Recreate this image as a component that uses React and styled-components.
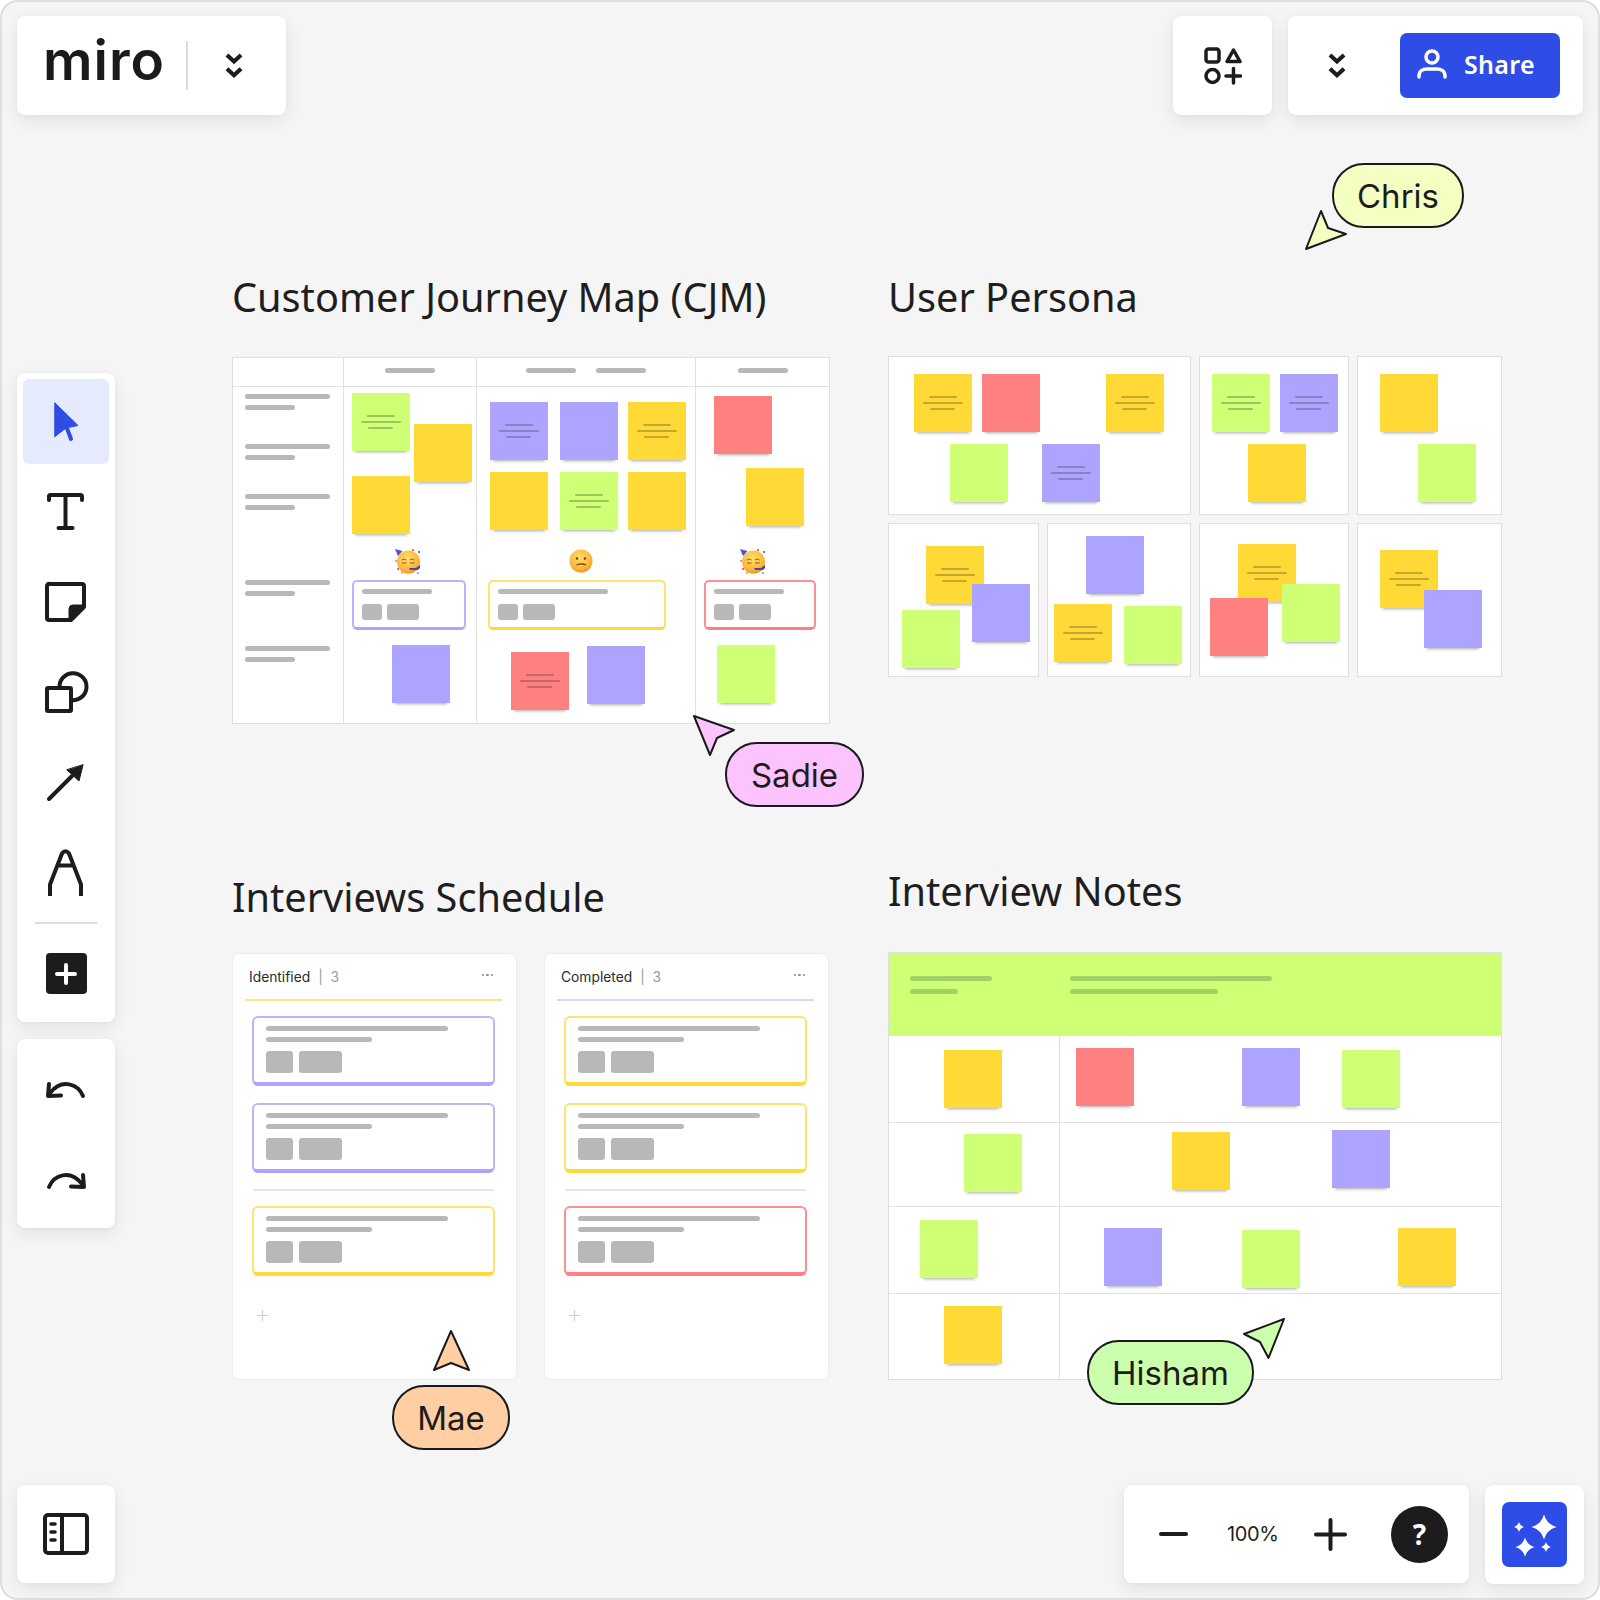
import React from "react";
import styled, { createGlobalStyle } from "styled-components";

const Y = "#ffd935", R = "#ff8080", P = "#ada4ff", G = "#cfff75";
const LIGHT = { [Y]: "#ffe36e", [R]: "#fb8f92", [P]: "#bcb4ff" };
const INK = "#1c1c1e";
const BLUE = "#2e4de6";
const SANS = '"Noto Sans", "Open Sans", sans-serif';
const UI = 'Inter, "Liberation Sans", sans-serif';

const Global = createGlobalStyle`
  html, body { margin: 0; padding: 0; background: #fff; }
  * { box-sizing: border-box; }
`;

const Shell = styled.div`
  width: 1600px;
  height: 1600px;
  display: grid;
  background: #f5f5f5;
  border-radius: 18px;
  box-shadow: inset 0 0 0 2px #dfdfdf;
  overflow: hidden;
  font-family: ${UI};
  color: ${INK};
`;

/* ---------- floating chrome ---------- */
const Chrome = styled.div`
  grid-area: 1 / 1;
  position: relative;
  z-index: 2;
  display: grid;
  grid-template-rows: auto 1fr auto;
  padding: 16px 16px 16px 17px;
  pointer-events: none;
`;
const TopBar = styled.div`
  display: flex;
  justify-content: space-between;
  padding-right: 1px;
`;
const BottomBar = styled.div`
  display: flex;
  justify-content: space-between;
`;
const Group = styled.div`
  display: flex;
  gap: 16px;
`;
const Panel = styled.div`
  background: #fff;
  border-radius: 8px;
  box-shadow: 0 6px 18px rgba(20, 20, 40, 0.08), 0 1px 4px rgba(20, 20, 40, 0.04);
`;
const LogoPanel = styled(Panel)`
  width: 269px;
  height: 99px;
  display: flex;
  align-items: center;
  padding-left: 26px;
`;
const LogoText = styled.span`
  font-family: ${UI};
  font-size: 55px;
  font-weight: 600;
  line-height: 1;
  letter-spacing: 1px;
  width: 143px;
  color: #1a1a1c;
  margin-top: -10px;
`;
const VDivider = styled.span`
  width: 2px;
  height: 49px;
  background: #dcdcdc;
`;
const Chevrons = styled.svg`
  width: 18px;
  height: 26px;
  fill: none;
  stroke: ${INK};
  stroke-width: 3.8;
  flex: none;
  margin-left: ${(p) => p.$ml || 0}px;
`;
const SquarePanel = styled(Panel)`
  width: 99px;
  height: 99px;
  display: flex;
  align-items: center;
  justify-content: center;
`;
const SharePanel = styled(Panel)`
  width: 295px;
  height: 99px;
  display: flex;
  align-items: center;
  padding-left: 40px;
`;
const ShareButton = styled.div`
  margin-left: 54px;
  width: 160px;
  height: 65px;
  border-radius: 7px;
  background: ${BLUE};
  display: flex;
  align-items: center;
  gap: 17px;
  padding: 0 0 3px 17px;
  color: #fff;
  font-family: ${SANS};
  font-size: 25px;
  font-weight: 600;
  letter-spacing: 0.3px;
`;
const ToolColumn = styled.div`
  display: flex;
  flex-direction: column;
  gap: 17px;
  width: 98px;
  margin-top: 258px;
`;
const ToolPanel = styled(Panel)`
  display: flex;
  flex-direction: column;
  gap: 5px;
  padding: 6px 6px 28px;
`;
const UndoPanel = styled(Panel)`
  display: flex;
  flex-direction: column;
  gap: 6px;
  padding: 7px 6px 0;
  height: 189px;
`;
const Tool = styled.div`
  height: 85px;
  display: flex;
  align-items: center;
  justify-content: center;
  border-radius: 6px;
  background: ${(p) => (p.$active ? "#e6eafd" : "transparent")};
`;
const ToolDivider = styled.div`
  height: 2px;
  margin: 3px 12px 24px;
  background: #dcdcdc;
`;
const AddButton = styled.div`
  width: 41px;
  height: 41px;
  border-radius: 4px;
  background: ${INK};
  align-self: center;
  display: flex;
  align-items: center;
  justify-content: center;
`;
const IconPanel = styled(Panel)`
  width: 98px;
  height: 98px;
  display: flex;
  align-items: center;
  justify-content: center;
`;
const ZoomPanel = styled(Panel)`
  width: 345px;
  height: 98px;
  display: flex;
  align-items: center;
  padding-left: 35px;
  gap: 39px;
`;
const ZoomValue = styled.span`
  width: 48px;
  font-size: 20px;
  text-align: center;
  letter-spacing: -0.4px;
  color: #1f1f21;
`;
const HelpDot = styled.span`
  width: 57px;
  height: 57px;
  margin-left: 5px;
  border-radius: 50%;
  background: ${INK};
  color: #fff;
  display: flex;
  align-items: center;
  justify-content: center;
  font-family: ${SANS};
  font-size: 28px;
  font-weight: 700;
`;
const SparkButton = styled.div`
  width: 65px;
  height: 65px;
  border-radius: 7px;
  background: ${BLUE};
`;
const Svg = styled.svg`
  display: block;
  flex: none;
  fill: none;
  stroke: ${(p) => p.$stroke || INK};
  stroke-width: ${(p) => p.$sw || 4};
  stroke-linecap: round;
  stroke-linejoin: round;
`;

/* ---------- board ---------- */
const Board = styled.div`
  grid-area: 1 / 1;
  position: relative;
  display: grid;
  grid-template-columns: 598px 614px;
  grid-template-rows: 451px auto;
  column-gap: 58px;
  row-gap: 143px;
  padding: 272px 0 0 232px;
  align-content: start;
`;
const Section = styled.section`
  display: flex;
  flex-direction: column;
  gap: ${(p) => p.$gap}px;
  align-self: ${(p) => (p.$top ? "start" : "end")};
`;
const Title = styled.h2`
  margin: 0;
  font-family: ${SANS};
  font-size: 39.7px;
  font-weight: 400;
  line-height: 50px;
  color: #1e1e20;
  white-space: nowrap;
`;
const Frame = styled.div`
  position: relative;
  background: #fff;
  border: 1px solid #dedede;
`;
const CjmFrame = styled(Frame)`
  height: 367px;
  display: grid;
  grid-template-columns: 111px 133px 219px 1fr;
  grid-template-rows: 29px 1fr;
`;
const HeadCell = styled.div`
  display: flex;
  align-items: center;
  justify-content: center;
  gap: 20px;
  padding-bottom: 4px;
  border-bottom: 1px solid #e2e2e2;
  border-right: ${(p) => (p.$last ? "0" : "1px solid #e2e2e2")};
`;
const BodyCell = styled.div`
  border-right: ${(p) => (p.$last ? "0" : "1px solid #e2e2e2")};
  display: flex;
  flex-direction: column;
  padding: ${(p) => p.$pad || "0"};
`;
const Bar = styled.span`
  display: block;
  flex: none;
  width: ${(p) => p.$w}px;
  height: 5px;
  border-radius: 3px;
  background: ${(p) => p.$c || "#b8b8b8"};
`;
const LabelPair = styled.div`
  display: flex;
  flex-direction: column;
  gap: 6px;
  margin-top: ${(p) => p.$mt}px;
`;
const Note = styled.div.attrs((p) => ({ style: { left: p.$x, top: p.$y } }))`
  position: absolute;
  width: ${(p) => p.$w || 58}px;
  height: 58px;
  background: ${(p) => p.$c};
  box-shadow: 0 4px 3px -3px rgba(0, 0, 0, 0.34);
  display: flex;
  flex-direction: column;
  align-items: center;
  justify-content: center;
  gap: 4px;
  padding-right: 1px;
`;
const NoteLine = styled.span`
  height: 2px;
  width: ${(p) => p.$w}px;
  background: rgba(40, 40, 40, 0.28);
  border-radius: 1px;
`;
const MiniCard = styled.div.attrs((p) => ({ style: { left: p.$x, top: p.$y } }))`
  position: absolute;
  width: ${(p) => p.$w}px;
  height: 50px;
  background: #fff;
  border: 2px solid ${(p) => LIGHT[p.$c]};
  border-bottom: 3px solid ${(p) => p.$c};
  border-radius: 5px;
  padding: 7px 8px;
  display: flex;
  flex-direction: column;
  gap: 10px;
`;
const Chips = styled.div`
  display: flex;
  gap: ${(p) => p.$gap || 5}px;
`;
const Chip = styled.span`
  width: ${(p) => p.$w}px;
  height: ${(p) => p.$h}px;
  border-radius: 3px;
  background: #b8b8b8;
`;
const Face = styled.svg.attrs((p) => ({ style: { left: p.$x, top: p.$y } }))`
  position: absolute;
  width: 28px;
  height: 28px;
`;
const PersonaStack = styled.div`
  display: flex;
  flex-direction: column;
  gap: 8px;
`;
const PersonaRow = styled.div`
  display: flex;
  gap: 8px;
`;
const PersonaFrame = styled(Frame)`
  width: ${(p) => p.$w}px;
  height: ${(p) => p.$h}px;
`;
const Columns = styled.div`
  display: flex;
  gap: 27px;
`;
const Column = styled.div`
  width: 285px;
  height: 427px;
  background: #fff;
  border: 1px solid #ececec;
  border-radius: 7px;
  display: flex;
  flex-direction: column;
`;
const ColumnHead = styled.div`
  height: 45px;
  padding: 0 23px 0 16px;
  display: flex;
  align-items: center;
  font-size: 13.8px;
  color: #2a2a2c;
`;
const Count = styled.span`
  color: #9a9a9a;
  margin-left: 8px;
`;
const Dots = styled.span`
  margin-left: auto;
  display: flex;
  gap: 2px;
  margin-top: -3px;
`;
const Dot = styled.i`
  width: 2.5px;
  height: 2.5px;
  border-radius: 50%;
  background: #888;
`;
const ColumnRule = styled.div`
  height: 2px;
  margin: 0 14px 0 12px;
  background: ${(p) => p.$c};
`;
const CardList = styled.div`
  padding: 15px 21px 0 19px;
  display: flex;
  flex-direction: column;
  gap: 17px;
`;
const BigCard = styled.div`
  height: 70px;
  background: #fff;
  border: 2px solid ${(p) => LIGHT[p.$c]};
  border-bottom: 4px solid ${(p) => p.$c};
  border-radius: 6px;
  padding: 8px 12px 6px;
  display: flex;
  flex-direction: column;
  gap: 6px;
`;
const CardChips = styled(Chips)`
  margin-top: 3px;
`;
const ListRule = styled.div`
  height: 2px;
  margin: -1px 1px -2px;
  background: #e8e8e8;
`;
const AddMark = styled(Svg)`
  margin: 34px 0 0 24px;
`;
const NotesFrame = styled(Frame)`
  height: 428px;
  display: grid;
  grid-template-columns: 171px 1fr;
  grid-template-rows: 83px 86px 84px 87px 1fr;
`;
const NotesHead = styled.div`
  grid-column: 1 / -1;
  background: ${G};
  display: grid;
  grid-template-columns: 171px 1fr;
  padding-top: 23px;
`;
const HeadGroup = styled.div`
  display: flex;
  flex-direction: column;
  gap: 8px;
  padding-left: ${(p) => p.$pl}px;
`;
const NotesCell = styled.div`
  border-top: ${(p) => (p.$first ? "0" : "1px solid #e2e2e2")};
  border-right: ${(p) => (p.$left ? "1px solid #e2e2e2" : "0")};
`;

/* cursors */
const CursorSvg = styled.svg`
  position: absolute;
  overflow: visible;
  z-index: 1;
`;
const Pill = styled.div.attrs((p) => ({ style: { left: p.$x, top: p.$y, width: p.$w } }))`
  position: absolute;
  z-index: 1;
  height: 65px;
  border: 2px solid #1a1a1c;
  border-radius: 32px;
  background: ${(p) => p.$c};
  display: flex;
  align-items: center;
  justify-content: center;
  font-family: ${UI};
  font-size: 33px;
  color: #1c1c1e;
`;

/* ---------- data (page coordinates, converted to frame offsets when drawn) ---------- */
const cjmNotes = [
  [G, 352, 393, 1], [Y, 414, 424], [Y, 352, 476],
  [P, 490, 402, 1], [P, 560, 402], [Y, 628, 402, 1],
  [Y, 490, 472], [G, 560, 472, 1], [Y, 628, 472],
  [R, 714, 396], [Y, 746, 468],
  [P, 392, 645], [R, 511, 652, 1], [P, 587, 646], [G, 717, 645],
];
const miniCards = [
  { c: P, x: 352, w: 114, bar: 70 },
  { c: Y, x: 488, w: 178, bar: 110 },
  { c: R, x: 704, w: 112, bar: 70 },
];
const personaRows = [
  [
    { x: 888, y: 356, w: 303, h: 159, notes: [[Y, 914, 374, 1], [R, 982, 374], [Y, 1106, 374, 1], [G, 950, 444], [P, 1042, 444, 1]] },
    { x: 1199, y: 356, w: 150, h: 159, notes: [[G, 1212, 374, 1], [P, 1280, 374, 1], [Y, 1248, 444]] },
    { x: 1357, y: 356, w: 145, h: 159, notes: [[Y, 1380, 374], [G, 1418, 444]] },
  ],
  [
    { x: 888, y: 523, w: 151, h: 154, notes: [[Y, 926, 546, 1], [P, 972, 584], [G, 902, 610]] },
    { x: 1047, y: 523, w: 144, h: 154, notes: [[P, 1086, 536], [Y, 1054, 604, 1], [G, 1124, 606]] },
    { x: 1199, y: 523, w: 150, h: 154, notes: [[Y, 1238, 544, 1], [R, 1210, 598], [G, 1282, 584]] },
    { x: 1357, y: 523, w: 145, h: 154, notes: [[Y, 1380, 550, 1], [P, 1424, 590]] },
  ],
];
const interviewNotes = [
  [Y, 944, 1050], [R, 1076, 1048], [P, 1242, 1048], [G, 1342, 1050],
  [G, 964, 1134], [Y, 1172, 1132], [P, 1332, 1130],
  [G, 920, 1220], [P, 1104, 1228], [G, 1242, 1230], [Y, 1398, 1228],
  [Y, 944, 1306],
];
const cursors = [
  { name: "Chris", c: "#f6ffc2", x: 1332, y: 163, w: 132, pts: [[1306, 249], [1321, 211], [1328, 228], [1346, 234]] },
  { name: "Sadie", c: "#fdc3ff", x: 725, y: 742, w: 139, pts: [[694, 716], [734, 730], [717, 738], [710, 755]] },
  { name: "Mae", c: "#ffcfa3", x: 392, y: 1385, w: 118, pts: [[451, 1331], [469, 1370], [451, 1363], [434, 1370]] },
  { name: "Hisham", c: "#ccffad", x: 1087, y: 1340, w: 167, pts: [[1284, 1319], [1244, 1334], [1260, 1342], [1268.5, 1358]] },
];

const StickyNote = ({ c, x, y, lines, w }) => (
  <Note $c={c} $x={x} $y={y} $w={w}>
    {lines && (
      <>
        <NoteLine $w={28} />
        <NoteLine $w={40} />
        <NoteLine $w={25} />
      </>
    )}
  </Note>
);

const DoubleChevron = ({ ml }) => (
  <Chevrons viewBox="0 0 16 24" $ml={ml}>
    <path d="M1.5 1.800 8 7.800l6.500-6M1.500 14.500 8 20.500l6.500-6" />
  </Chevrons>
);

const PartyFace = ({ x, y, id }) => (
  <Face viewBox="0 0 28 28" $x={x} $y={y}>
    <defs>
      <radialGradient id={id} cx="45%" cy="35%" r="70%">
        <stop offset="0%" stopColor="#ffe06a" />
        <stop offset="70%" stopColor="#fdb53a" />
        <stop offset="100%" stopColor="#ee8720" />
      </radialGradient>
    </defs>
    <circle cx="14.5" cy="15" r="11.5" fill={`url(#${id})`} />
    <path d="M1 2 8.5 4 4 9z" fill="#5a50c8" />
    <path d="M8 13c1.500-1 3-1 4.500 0M16 13c1.500-1 3-1 4.500 0M8 16h4.500M16 16h4.500" stroke="#8a5418" strokeWidth="1" fill="none" />
    <path d="M15 21h7l4-3v3l-2 2h-8z" fill="#4d46a8" />
    <circle cx="4" cy="22" r="1" fill="#d9413a" />
    <circle cx="25" cy="5" r="1" fill="#4d46a8" />
    <circle cx="19" cy="3" r="1" fill="#d9413a" />
    <circle cx="2" cy="14" r=".8" fill="#4d46a8" />
    <circle cx="8" cy="26" r=".8" fill="#d9413a" />
    <circle cx="24" cy="26" r=".8" fill="#4d46a8" />
  </Face>
);

const SadFace = ({ x, y }) => (
  <Face viewBox="0 0 28 28" $x={x} $y={y}>
    <defs>
      <radialGradient id="sad" cx="45%" cy="35%" r="70%">
        <stop offset="0%" stopColor="#ffe06a" />
        <stop offset="70%" stopColor="#fdb53a" />
        <stop offset="100%" stopColor="#ee8720" />
      </radialGradient>
    </defs>
    <circle cx="14" cy="14" r="11.500" fill="url(#sad)" />
    <circle cx="10" cy="11.500" r="1.200" fill="#6b4210" />
    <circle cx="18" cy="11.500" r="1.200" fill="#6b4210" />
    <path d="M9.500 18c2.500-1 4.500-1.300 6.500-1 1.200.2 2 .5 3 1" stroke="#6b4210" strokeWidth="1.300" fill="none" />
  </Face>
);

const star = (cx, cy, r) => {
  const k = r * 0.22;
  return `M${cx} ${cy - r}Q${cx + k} ${cy - k} ${cx + r} ${cy}Q${cx + k} ${cy + k} ${cx} ${cy + r}Q${cx - k} ${cy + k} ${cx - r} ${cy}Q${cx - k} ${cy - k} ${cx} ${cy - r}Z`;
};

const Sticky = ({ notes, ox, oy }) =>
  notes.map(([c, x, y, lines], i) => <StickyNote key={i} c={c} x={x - ox} y={y - oy} lines={lines} />);

const Cursor = ({ pts, c }) => {
  const xs = pts.map((p) => p[0]);
  const ys = pts.map((p) => p[1]);
  const l = Math.min(...xs);
  const t = Math.min(...ys);
  return (
    <CursorSvg
      viewBox={`${l} ${t} ${Math.max(...xs) - l} ${Math.max(...ys) - t}`}
      width={Math.max(...xs) - l}
      height={Math.max(...ys) - t}
      style={{ left: l, top: t }}
    >
      <polygon points={pts.map((p) => p.join(",")).join(" ")} fill={c} stroke="#1a1a1c" strokeWidth="2" strokeLinejoin="round" />
    </CursorSvg>
  );
};

const ScheduleColumn = ({ title, rule, cards }) => (
  <Column>
    <ColumnHead>
      {title}
      <Count>|&nbsp;&nbsp;3</Count>
      <Dots>
        <Dot />
        <Dot />
        <Dot />
      </Dots>
    </ColumnHead>
    <ColumnRule $c={rule} />
    <CardList>
      {cards.map((c, i) => (
        <React.Fragment key={i}>
          {i === 2 && <ListRule />}
          <BigCard $c={c}>
            <Bar $w={182} />
            <Bar $w={106} />
            <CardChips $gap={6}>
              <Chip $w={27} $h={22} />
              <Chip $w={43} $h={22} />
            </CardChips>
          </BigCard>
        </React.Fragment>
      ))}
    </CardList>
    <AddMark as="svg" width="11" height="11" viewBox="0 0 11 11" $stroke="#cfcfcf" $sw={1.2}>
      <path d="M5.500 .5v10M.5 5.500h10" />
    </AddMark>
  </Column>
);

export default function App() {
  return (
    <Shell>
      <Global />
      <Board>
        <Section $gap={35} $top>
          <Title>Customer Journey Map (CJM)</Title>
          <CjmFrame>
            <HeadCell />
            <HeadCell><Bar $w={50} /></HeadCell>
            <HeadCell><Bar $w={50} /><Bar $w={50} /></HeadCell>
            <HeadCell $last><Bar $w={50} /></HeadCell>
            <BodyCell $pad="7px 0 0 12px">
              <LabelPair $mt={0}><Bar $w={85} /><Bar $w={50} /></LabelPair>
              <LabelPair $mt={34}><Bar $w={85} /><Bar $w={50} /></LabelPair>
              <LabelPair $mt={34}><Bar $w={85} /><Bar $w={50} /></LabelPair>
              <LabelPair $mt={70}><Bar $w={85} /><Bar $w={50} /></LabelPair>
              <LabelPair $mt={50}><Bar $w={85} /><Bar $w={50} /></LabelPair>
            </BodyCell>
            <BodyCell />
            <BodyCell />
            <BodyCell $last />
            <Sticky notes={cjmNotes} ox={233} oy={358} />
            {miniCards.map((m) => (
              <MiniCard key={m.x} $c={m.c} $x={m.x - 233} $y={222} $w={m.w}>
                <Bar $w={m.bar} />
                <Chips>
                  <Chip $w={20} $h={16} />
                  <Chip $w={32} $h={16} />
                </Chips>
              </MiniCard>
            ))}
            <PartyFace id="p1" x={161} y={189} />
            <SadFace x={334} y={189} />
            <PartyFace id="p2" x={506} y={189} />
          </CjmFrame>
        </Section>

        <Section $gap={34} $top>
          <Title>User Persona</Title>
          <PersonaStack>
            {personaRows.map((row, i) => (
              <PersonaRow key={i}>
                {row.map((f) => (
                  <PersonaFrame key={f.x} $w={f.w} $h={f.h}>
                    <Sticky notes={f.notes} ox={f.x + 1} oy={f.y + 1} />
                  </PersonaFrame>
                ))}
              </PersonaRow>
            ))}
          </PersonaStack>
        </Section>

        <Section $gap={31}>
          <Title>Interviews Schedule</Title>
          <Columns>
            <ScheduleColumn title="Identified" rule="#ffe680" cards={[P, P, Y]} />
            <ScheduleColumn title="Completed" rule="#d9d6f7" cards={[Y, Y, R]} />
          </Columns>
        </Section>

        <Section $gap={36}>
          <Title>Interview Notes</Title>
          <NotesFrame>
            <NotesHead>
              <HeadGroup $pl={21}>
                <Bar $w={82} $c="#a3d166" />
                <Bar $w={48} $c="#a3d166" />
              </HeadGroup>
              <HeadGroup $pl={10}>
                <Bar $w={202} $c="#a3d166" />
                <Bar $w={148} $c="#a3d166" />
              </HeadGroup>
            </NotesHead>
            {[0, 1, 2, 3].map((r) => (
              <React.Fragment key={r}>
                <NotesCell $left $first={r === 0} />
                <NotesCell $first={r === 0} />
              </React.Fragment>
            ))}
            <Sticky notes={interviewNotes} ox={889} oy={953} />
          </NotesFrame>
        </Section>

        {cursors.map((c) => (
          <React.Fragment key={c.name}>
            <Cursor pts={c.pts} c={c.c} />
            <Pill $x={c.x} $y={c.y} $w={c.w} $c={c.c}>{c.name}</Pill>
          </React.Fragment>
        ))}
      </Board>

      <Chrome>
        <TopBar>
          <LogoPanel>
            <LogoText>miro</LogoText>
            <VDivider />
            <DoubleChevron ml={37} />
          </LogoPanel>
          <Group>
            <SquarePanel>
              <Svg width="38" height="38" viewBox="0 0 38 38" $sw={3.5}>
                <rect x="2" y="2" width="13" height="13" rx="2.500" />
                <path d="M29.500 3 36 14.500H23z" />
                <circle cx="8.500" cy="29" r="6.500" />
                <path d="M29.500 21.500V36M22 29h14.500" />
              </Svg>
            </SquarePanel>
            <SharePanel>
              <DoubleChevron />
              <ShareButton>
                <Svg width="30" height="34" viewBox="0 0 30 34" $stroke="#fff" $sw={3.5}>
                  <circle cx="15" cy="10" r="6" />
                  <path d="M2 30v-1c0-5 4-7 8-7h10c4 0 8 2 8 7v1" />
                </Svg>
                Share
              </ShareButton>
            </SharePanel>
          </Group>
        </TopBar>

        <ToolColumn>
          <ToolPanel>
            <Tool $active>
              <Svg width="48" height="48" viewBox="0 0 48 48" $stroke={BLUE}>
                <path d="M13 5 36 27.500 24 30 13 38.500z" fill={BLUE} strokeWidth="1" />
                <path d="M24.500 29 29 41" />
              </Svg>
            </Tool>
            <Tool>
              <Svg width="48" height="48" viewBox="0 0 48 48">
                <path d="M7 12V8.500Q7 7 8.500 7h30Q40 7 40 8.500V12M23.500 7v33M16.500 40h14" />
              </Svg>
            </Tool>
            <Tool>
              <Svg width="48" height="48" viewBox="0 0 48 48">
                <path d="M8 6h32a2 2 0 0 1 2 2v21L29 42H7a2 2 0 0 1-2-2V8a2 2 0 0 1 3-2z" />
                <path d="M42 27H31a4 4 0 0 0-4 4v11h2l13-13z" fill={INK} strokeWidth="1" />
              </Svg>
            </Tool>
            <Tool>
              <Svg width="48" height="48" viewBox="0 0 48 48">
                <rect x="5" y="20" width="24" height="23" rx="1" />
                <path d="M17.600 20A13.500 13.500 0 1 1 29 32" />
              </Svg>
            </Tool>
            <Tool>
              <Svg width="48" height="48" viewBox="0 0 48 48">
                <path d="M7 41 30 18" />
                <path d="M41 7 37 23 25 12z" fill={INK} strokeWidth="1" />
              </Svg>
            </Tool>
            <Tool>
              <Svg width="52" height="52" viewBox="0 0 52 52" $stroke={INK}>
                <path d="M10 50V38.500L22 7.500Q25.500 3 29 7.500L41 38.500V50M17.500 19.500h16" strokeLinecap="butt" />
              </Svg>
            </Tool>
            <ToolDivider />
            <AddButton>
              <Svg width="22" height="22" viewBox="0 0 22 22" $stroke="#fff" $sw={4}>
                <path d="M11 2v18M2 11h18" />
              </Svg>
            </AddButton>
          </ToolPanel>
          <UndoPanel>
            <Tool>
              <Svg width="48" height="48" viewBox="0 0 48 48">
                <path d="M41 31C36 19 20 13 8 28M7 19 6 31l13-.5" />
              </Svg>
            </Tool>
            <Tool>
              <Svg width="48" height="48" viewBox="0 0 48 48">
                <path d="M7 31C12 19 28 13 40 28M41 19l1 12-13-.5" />
              </Svg>
            </Tool>
          </UndoPanel>
        </ToolColumn>

        <BottomBar>
          <IconPanel>
            <Svg width="46" height="42" viewBox="0 0 46 42">
              <rect x="2" y="2" width="42" height="38" rx="3" />
              <path d="M19 2v38" />
              <path d="M8 11h4M8 19h4M8 27h4" strokeWidth="3.500" />
            </Svg>
          </IconPanel>
          <Group>
            <ZoomPanel>
              <Svg width="29" height="4" viewBox="0 0 29 4">
                <path d="M2 2h25" />
              </Svg>
              <ZoomValue>100%</ZoomValue>
              <Svg width="33" height="33" viewBox="0 0 33 33">
                <path d="M16.500 2v29M2 16.500h29" />
              </Svg>
              <HelpDot>?</HelpDot>
            </ZoomPanel>
            <SquarePanel>
              <SparkButton>
                <svg width="65" height="65" viewBox="0 0 65 65" fill="#fff">
                  <path d={star(42, 25, 12.500)} />
                  <path d={star(23, 45, 9.500)} />
                  <path d={star(17, 25, 5)} />
                  <path d={star(44, 45, 5)} />
                </svg>
              </SparkButton>
            </SquarePanel>
          </Group>
        </BottomBar>
      </Chrome>
    </Shell>
  );
}
